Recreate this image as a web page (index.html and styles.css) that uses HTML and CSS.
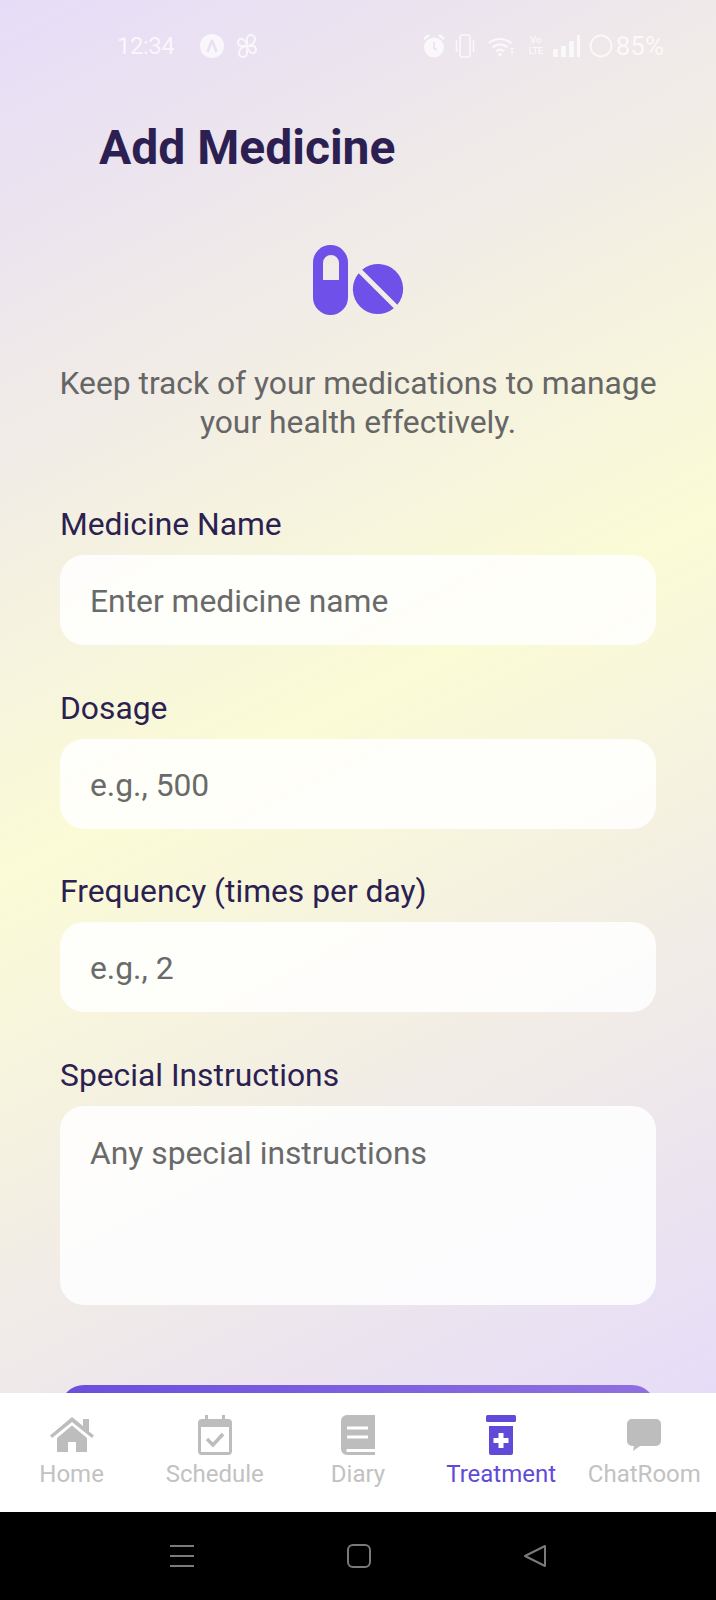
FILE: index.html
```html
<!DOCTYPE html>
<html lang="en">
<head>
  <meta charset="UTF-8">
  <title>Add Medicine</title>
  <link rel="stylesheet" href="styles.css">
</head>
<body>
  <div class="screen">
    <div class="page">
      <div class="status-bar">
        <div class="status-left">
          <span class="clock">12:34</span>
          <svg width="24" height="24" viewBox="0 0 24 24"><circle cx="12" cy="12" r="12" fill="#fff"/><path d="M12 6 7.500 18M12 6l4.500 12" stroke="#e9e2f3" stroke-width="2.600" fill="none"/></svg>
          <svg width="24" height="26" viewBox="0 0 24 26" fill="none" stroke="#fff" stroke-width="2"><path d="M12 13V6a4 4 0 0 1 8 0c0 4-4 7-8 7Z"/><path d="M12 13h7a4 4 0 0 1 0 7c-3 1-7-3-7-7Z"/><path d="M12 13v7a4 4 0 0 1-8 0c0-4 4-7 8-7Z"/><path d="M12 13H5a4 4 0 0 1 0-7c3-1 7 3 7 7Z"/></svg>
        </div>
        <div class="status-right">
          <svg width="24" height="26" viewBox="0 0 24 26"><circle cx="12" cy="14.500" r="10" fill="#fff"/><path d="M2 6l5-4M22 6l-5-4" stroke="#fff" stroke-width="2.400"/><path d="M12 9v6l3 2" stroke="#ece5f1" stroke-width="2" fill="none"/></svg>
          <svg width="20" height="26" viewBox="0 0 20 26" fill="none" stroke="#fff" stroke-width="1.600"><rect x="5" y="2" width="10" height="22" rx="2"/><path d="M1.500 7v12M18.500 7v12"/></svg>
          <svg class="sb-wifi" width="28" height="24" viewBox="0 0 30 24" fill="none" stroke="#fff" stroke-width="2.400"><path d="M2 9c7-6 17-6 24 0M6 13.500c5-4 11-4 16 0M10 17.500c2.500-2 5.500-2 8 0"/><circle cx="14" cy="21" r="1.800" fill="#fff" stroke="none"/><path d="M27 14v8" stroke-dasharray="2 1.500"/></svg>
          <span class="volte">Vo<br>LTE</span>
          <svg width="30" height="26" viewBox="0 0 30 26" fill="#fff"><rect x="1" y="16" width="5" height="8"/><rect x="9" y="13" width="5" height="11"/><rect x="17" y="8" width="5" height="16"/><rect x="25" y="2" width="3" height="22"/></svg>
          <svg class="sb-ring" width="24" height="26" viewBox="0 0 24 26" fill="none" stroke="#fff" stroke-width="1.800"><circle cx="12" cy="13" r="10.500"/></svg>
          <span class="battery">85%</span>
        </div>
      </div>

      <main class="content">
        <h1 class="title">Add Medicine</h1>

        <div class="hero-icon">
          <svg width="92" height="72" viewBox="0 0 92 72">
            <path fill="#6f50e8" fill-rule="evenodd" d="M18.500 1A17.500 17.500 0 0 1 36 18.500v35a17.500 17.500 0 0 1-35 0v-35A17.500 17.500 0 0 1 18.500 1ZM19 11a8 8 0 0 0-8 8v17h16V19a8 8 0 0 0-8-8Z"/>
            <path fill="#6f50e8" d="M50.170 25.630A25 25 0 0 1 85.370 60.830ZM46.630 29.170A25 25 0 0 0 81.830 64.370Z"/>
          </svg>
        </div>

        <p class="intro">Keep track of your medications to manage your health effectively.</p>

        <form class="med-form">
          <div class="field">
            <label class="field-label" for="name">Medicine Name</label>
            <input class="field-input" id="name" type="text" placeholder="Enter medicine name">
          </div>
          <div class="field">
            <label class="field-label" for="dosage">Dosage</label>
            <input class="field-input" id="dosage" type="text" placeholder="e.g., 500">
          </div>
          <div class="field">
            <label class="field-label" for="freq">Frequency (times per day)</label>
            <input class="field-input" id="freq" type="text" placeholder="e.g., 2">
          </div>
          <div class="field">
            <label class="field-label" for="notes">Special Instructions</label>
            <textarea class="field-input field-area" id="notes" placeholder="Any special instructions"></textarea>
          </div>
          <div class="save-btn"></div>
        </form>
      </main>
    </div>

    <nav class="tabs">
      <a class="tab">
        <svg width="44" height="40" viewBox="0 0 44 40" fill="#bdbdbd"><path d="M22 2 33 11V4h6v12.500l5 4-2 2.500L22 7 2 23l-2-2.500Z"/><path d="M7 23 22 10.500 37 23v14H26V27h-8v10H7Z"/></svg>
        <span>Home</span>
      </a>
      <a class="tab">
        <svg width="34" height="40" viewBox="0 0 34 40"><path fill="#bdbdbd" fill-rule="evenodd" d="M7 0h3v4h14V0h3v4h3a4 4 0 0 1 4 4v28a4 4 0 0 1-4 4H4a4 4 0 0 1-4-4V8a4 4 0 0 1 4-4h3ZM3 12v25h28V12Z"/><path d="M9 24l6 6 10-11" fill="none" stroke="#bdbdbd" stroke-width="3.500"/></svg>
        <span>Schedule</span>
      </a>
      <a class="tab">
        <svg width="34" height="40" viewBox="0 0 34 40"><path fill="#bdbdbd" d="M6 0h28v34H6a2 2 0 0 0 0 3h28v3H6a6 6 0 0 1-6-6V6a6 6 0 0 1 6-6Z"/><path d="M6 13h21M6 22h21" stroke="#fff" stroke-width="3"/></svg>
        <span>Diary</span>
      </a>
      <a class="tab active">
        <svg width="30" height="40" viewBox="0 0 30 40"><rect width="30" height="7" rx="1.500" fill="#5f4bd8"/><path fill="#5f4bd8" d="M3 11h24v27a2 2 0 0 1-2 2H5a2 2 0 0 1-2-2Z"/><path fill="#fff" d="M12.500 18h5v5h5v5h-5v5h-5v-5h-5v-5h5Z"/></svg>
        <span>Treatment</span>
      </a>
      <a class="tab">
        <svg width="34" height="40" viewBox="0 0 34 40" fill="#bdbdbd"><path d="M5 4h24a5 5 0 0 1 5 5v17a5 5 0 0 1-5 5H13l-7 5 1-5H5a5 5 0 0 1-5-5V9a5 5 0 0 1 5-5Z"/></svg>
        <span>ChatRoom</span>
      </a>
    </nav>

    <div class="system-nav">
      <svg width="24" height="24" viewBox="0 0 24 24" stroke="#7a7a7a" stroke-width="2"><path d="M0 2h24M0 12h24M0 22h24"/></svg>
      <svg width="24" height="24" viewBox="0 0 24 24" fill="none" stroke="#7a7a7a" stroke-width="2"><rect x="1" y="1" width="22" height="22" rx="5"/></svg>
      <svg width="24" height="24" viewBox="0 0 24 24" fill="none" stroke="#7a7a7a" stroke-width="2"><path d="M22 2v20L2 12Z" stroke-linejoin="round"/></svg>
    </div>
  </div>
</body>
</html>
```

FILE: styles.css
```css
* {
  box-sizing: border-box;
}
body {
  margin: 0;
  font-family: Roboto, sans-serif;
  background: #000;
}
.screen {
  width: 716px;
  height: 1600px;
  display: flex;
  flex-direction: column;
  overflow: hidden;
}
.page {
  height: 1393px;
  flex: none;
  overflow: hidden;
  background: linear-gradient(153deg, #e6dcf8 0%, #fbfbd6 50%, #e6dcf8 100%);
}
.status-bar {
  height: 92px;
  display: flex;
  justify-content: space-between;
  align-items: center;
  padding: 0 52px 0 117px;
  color: #fff;
  opacity: 0.75;
}
.status-left,
.status-right {
  display: flex;
  align-items: center;
}
.status-left {
  gap: 11px;
}
.status-right {
  gap: 9px;
}
.clock {
  font-size: 24px;
  letter-spacing: -0.5px;
  margin-right: 15px;
}
.sb-wifi {
  margin-left: 3px;
}
.sb-ring {
  margin-left: -2px;
}
.volte {
  width: 14px;
  margin-left: 5px;
  font-size: 9px;
  line-height: 11px;
  text-align: center;
  font-weight: 500;
}
.battery {
  font-size: 26px;
  margin-left: -6px;
}
.content {
  padding: 0 60px;
}
.title {
  margin: 29px 0 0 39px;
  font-size: 48px;
  line-height: 54px;
  font-weight: 700;
  color: #2c1f52;
}
.hero-icon {
  display: flex;
  justify-content: center;
  margin-top: 69px;
  height: 72px;
}
.intro {
  margin: 48px -10px 0;
  font-size: 31.800px;
  line-height: 39px;
  color: #666;
  text-align: center;
}
.med-form {
  margin-top: 61px;
}
.field {
  margin-bottom: 41.500px;
}
.field-label {
  display: block;
  font-size: 31.800px;
  line-height: 42px;
  color: #2c1f52;
  margin-bottom: 10px;
}
.field-input {
  display: block;
  width: 100%;
  height: 90px;
  padding: 2px 30px 0;
  border: 0;
  border-radius: 24px;
  background: rgba(255, 255, 255, 0.85);
  font-family: Roboto, sans-serif;
  font-size: 31.800px;
  color: #333;
  outline: none;
}
.field-input::placeholder {
  color: #6a6a6a;
  opacity: 1;
}
.field-area {
  height: 199px;
  padding: 28px 30px 0;
  resize: none;
}
.save-btn {
  height: 90px;
  margin-top: 80px;
  border-radius: 24px;
  background: linear-gradient(90deg, #6a4fdc, #9070e0);
}
.tabs {
  height: 119px;
  flex: none;
  display: flex;
  background: #fff;
  padding-top: 22px;
}
.tab {
  width: 143.200px;
  display: flex;
  flex-direction: column;
  align-items: center;
  gap: 5px;
  font-size: 24px;
  line-height: 28px;
  color: #c2c2c2;
}
.tab svg {
  flex: none;
}
.tab.active {
  color: #5f4bd8;
}
.system-nav {
  flex: 1;
  background: #000;
  display: flex;
  justify-content: space-between;
  align-items: center;
  padding: 0 169px 0 170px;
}
```
